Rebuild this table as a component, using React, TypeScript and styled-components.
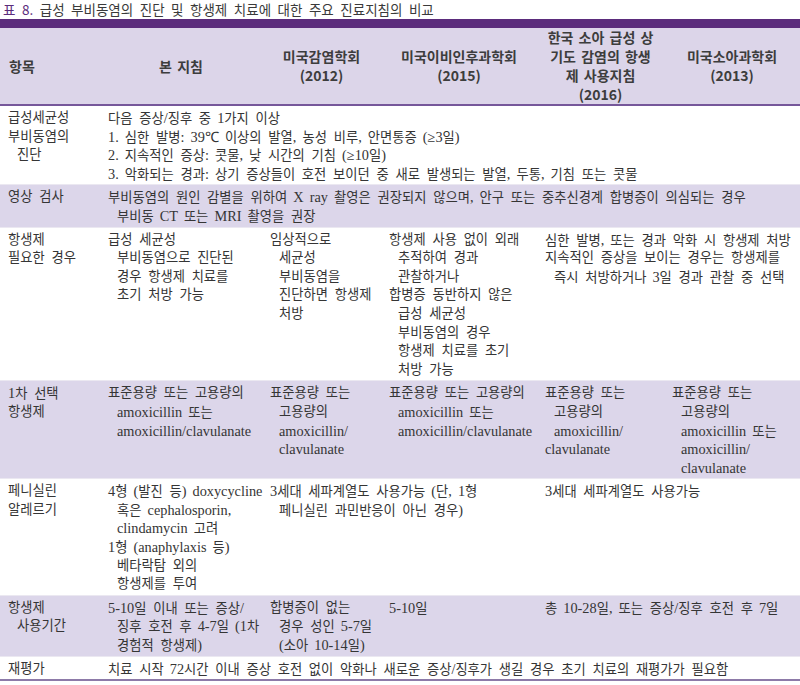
import React from "react";
import styled, { createGlobalStyle } from "styled-components";

const Global = createGlobalStyle`
  html, body { margin: 0; padding: 0; background: #fff; }
  body { font-family: "Liberation Serif", "Noto Sans CJK KR", serif; }
`;

const Page = styled.div`
  width: 800px;
`;

const Title = styled.h1`
  margin: 0 0 1px 0;
  padding-left: 3px;
  font-family: "Noto Sans CJK KR", sans-serif;
  font-weight: 400;
  font-size: 13.5px;
  line-height: 18px;
  word-spacing: 3.5px;
  color: #3a3a3a;
  white-space: nowrap;
`;

const TitleNum = styled.span`
  color: #5b2c7c;
`;

const Table = styled.table`
  width: 800px;
  border-collapse: collapse;
  table-layout: fixed;
  border-bottom: 2px solid #8d7aa8;
`;

const HeadCell = styled.th<{ $left?: boolean }>`
  background: #dcd5e9;
  border-top: 9px solid #5b2c7c;
  border-bottom: 2px solid #76579a;
  height: 76px;
  padding: ${(p) => (p.$left ? "0 0 0 9px" : "0")};
  text-align: ${(p) => (p.$left ? "left" : "center")};
  vertical-align: middle;
  font-family: "Noto Sans CJK KR", sans-serif;
  font-weight: 700;
  font-size: 14px;
  line-height: 19px;
  word-spacing: 2px;
  color: #3d3d3d;
  white-space: nowrap;
`;

const Row = styled.tr<{ $shade?: boolean }>`
  background: ${(p) => (p.$shade ? "#dcd6ea" : "#ffffff")};
`;

const Cell = styled.td`
  vertical-align: top;
  padding: 3px 0 1px 8px;
  border-top: 1px solid #ebe8f1;
  font-size: 13.3px;
  line-height: 18.6px;
  word-spacing: 3.4px;
  color: #353535;
`;

const Line = styled.div<{ $indent?: boolean }>`
  height: 18.6px;
  white-space: nowrap;
  padding-left: ${(p) => (p.$indent ? "9px" : "0")};
`;

const Latin = styled.span`
  font-family: "Liberation Serif", serif;
  font-size: 14.3px;
  word-spacing: 2.5px;
`;

type Ln = { t: string; i?: boolean };
type CellData = { lines: Ln[]; span?: number };
type RowData = { shade?: boolean; cells: CellData[] };

const L = (t: string): Ln => ({ t });
const I = (t: string): Ln => ({ t, i: true });

const renderText = (t: string) =>
  t.split(/([\uAC00-\uD7A3]+)/).map((part, k) =>
    /[\uAC00-\uD7A3]/.test(part) || part.trim() === "" ? (
      <React.Fragment key={k}>{part}</React.Fragment>
    ) : (
      <Latin key={k}>{part}</Latin>
    )
  );

const rows: RowData[] = [
  {
    cells: [
      { lines: [L("급성세균성"), L("부비동염의"), I("진단")] },
      {
        span: 5,
        lines: [
          L("다음 증상/징후 중 1가지 이상"),
          L("1. 심한 발병: 39℃ 이상의 발열, 농성 비루, 안면통증 (≥3일)"),
          L("2. 지속적인 증상: 콧물, 낮 시간의 기침 (≥10일)"),
          L("3. 악화되는 경과: 상기 증상들이 호전 보이던 중 새로 발생되는 발열, 두통, 기침 또는 콧물"),
        ],
      },
    ],
  },
  {
    shade: true,
    cells: [
      { lines: [L("영상 검사")] },
      {
        span: 5,
        lines: [
          L("부비동염의 원인 감별을 위하여 X ray 촬영은 권장되지 않으며, 안구 또는 중추신경계 합병증이 의심되는 경우"),
          I("부비동 CT 또는 MRI 촬영을 권장"),
        ],
      },
    ],
  },
  {
    cells: [
      { lines: [L("항생제"), L("필요한 경우")] },
      { lines: [L("급성 세균성"), I("부비동염으로 진단된"), I("경우 항생제 치료를"), I("초기 처방 가능")] },
      { lines: [L("임상적으로"), I("세균성"), I("부비동염을"), I("진단하면 항생제"), I("처방")] },
      {
        lines: [
          L("항생제 사용 없이 외래"),
          I("추적하여 경과"),
          I("관찰하거나"),
          L("합병증 동반하지 않은"),
          I("급성 세균성"),
          I("부비동염의 경우"),
          I("항생제 치료를 초기"),
          I("처방 가능"),
        ],
      },
      {
        span: 2,
        lines: [
          L("심한 발병, 또는 경과 악화 시 항생제 처방"),
          L("지속적인 증상을 보이는 경우는 항생제를"),
          I("즉시 처방하거나 3일 경과 관찰 중 선택"),
        ],
      },
    ],
  },
  {
    shade: true,
    cells: [
      { lines: [L("1차 선택"), L("항생제")] },
      { lines: [L("표준용량 또는 고용량의"), I("amoxicillin 또는"), I("amoxicillin/clavulanate")] },
      { lines: [L("표준용량 또는"), I("고용량의"), I("amoxicillin/"), I("clavulanate")] },
      { lines: [L("표준용량 또는 고용량의"), I("amoxicillin 또는"), I("amoxicillin/clavulanate")] },
      { lines: [L("표준용량 또는"), I("고용량의"), I("amoxicillin/"), L("clavulanate")] },
      { lines: [L("표준용량 또는"), I("고용량의"), I("amoxicillin 또는"), I("amoxicillin/"), I("clavulanate")] },
    ],
  },
  {
    cells: [
      { lines: [L("페니실린"), L("알레르기")] },
      {
        lines: [
          L("4형 (발진 등) doxycycline"),
          I("혹은 cephalosporin,"),
          I("clindamycin 고려"),
          L("1형 (anaphylaxis 등)"),
          I("베타락탐 외의"),
          I("항생제를 투여"),
        ],
      },
      { span: 2, lines: [L("3세대 세파계열도 사용가능 (단, 1형"), I("페니실린 과민반응이 아닌 경우)")] },
      { span: 2, lines: [L("3세대 세파계열도 사용가능")] },
    ],
  },
  {
    shade: true,
    cells: [
      { lines: [L("항생제"), I("사용기간")] },
      { lines: [L("5-10일 이내 또는 증상/"), I("징후 호전 후 4-7일 (1차"), I("경험적 항생제)")] },
      { lines: [L("합병증이 없는"), I("경우 성인 5-7일"), I("(소아 10-14일)")] },
      { lines: [L("5-10일")] },
      { span: 2, lines: [L("총 10-28일, 또는 증상/징후 호전 후 7일")] },
    ],
  },
  {
    cells: [
      { lines: [L("재평가")] },
      {
        span: 5,
        lines: [L("치료 시작 72시간 이내 증상 호전 없이 악화나 새로운 증상/징후가 생길 경우 초기 치료의 재평가가 필요함")],
      },
    ],
  },
];

const colWidths = [100, 162, 119, 156, 127, 136];

const headers: { lines: string[]; left?: boolean }[] = [
  { lines: ["항목"], left: true },
  { lines: ["본 지침"] },
  { lines: ["미국감염학회", "(2012)"] },
  { lines: ["미국이비인후과학회", "(2015)"] },
  { lines: ["한국 소아 급성 상", "기도 감염의 항생", "제 사용지침", "(2016)"] },
  { lines: ["미국소아과학회", "(2013)"] },
];

export default function App() {
  return (
    <Page>
      <Global />
      <Title>
        <TitleNum>표 8.</TitleNum> 급성 부비동염의 진단 및 항생제 치료에 대한 주요 진료지침의 비교
      </Title>
      <Table>
        <colgroup>
          {colWidths.map((w, i) => (
            <col key={i} style={{ width: w }} />
          ))}
        </colgroup>
        <thead>
          <tr>
            {headers.map((h, i) => (
              <HeadCell key={i} $left={h.left}>
                {h.lines.map((l, j) => (
                  <div key={j}>{l}</div>
                ))}
              </HeadCell>
            ))}
          </tr>
        </thead>
        <tbody>
          {rows.map((r, i) => (
            <Row key={i} $shade={r.shade}>
              {r.cells.map((c, j) => (
                <Cell key={j} colSpan={c.span}>
                  {c.lines.map((l, k) => (
                    <Line key={k} $indent={l.i}>
                      {renderText(l.t)}
                    </Line>
                  ))}
                </Cell>
              ))}
            </Row>
          ))}
        </tbody>
      </Table>
    </Page>
  );
}
